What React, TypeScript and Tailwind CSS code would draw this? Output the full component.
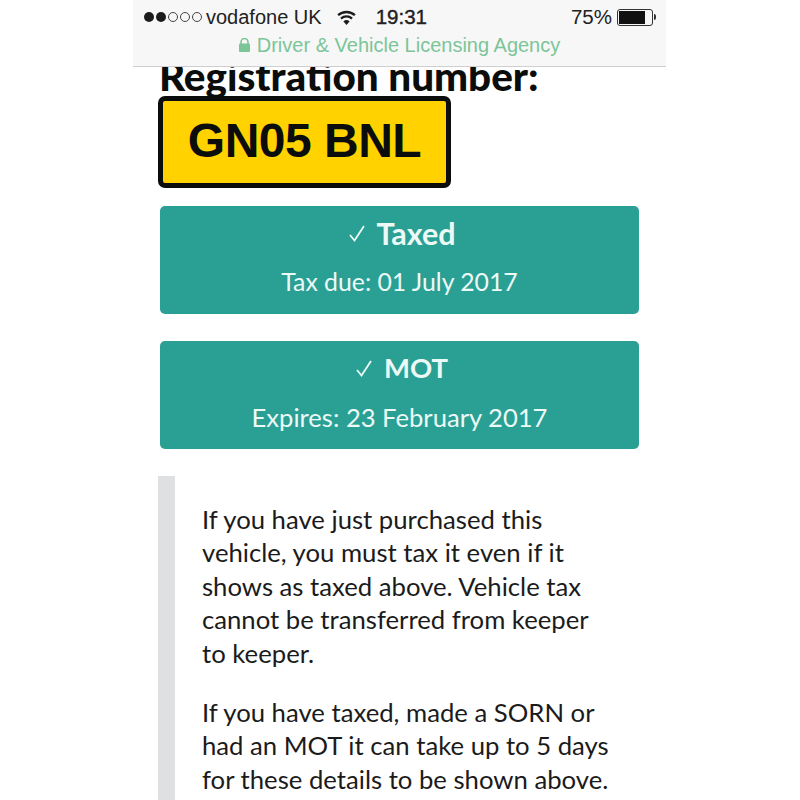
/**
 * DVLA vehicle enquiry result, photographed on a phone.
 */
const BODY_FONT = "font-['Lato','Noto_Sans',sans-serif]";

type StatusCardProps = { title: string; detail: string; check: string; size: string; detailSize: string };

function StatusCard({ title, detail, check, size, detailSize }: StatusCardProps) {
  return (
    <div className="h-[108px] rounded-[5px] bg-[#2a9f94] flex flex-col items-center text-[#ecfaf6]">
      <div className="mt-[8px] h-[38px] flex items-center">
        <svg className={check} width="18" height="17" viewBox="0 0 18 17" fill="none" stroke="currentColor" strokeWidth="1.8">
          <path d="M2 10 L6.5 15.5 L16 1" />
        </svg>
        <span className={`${size} font-bold leading-none`}>{title}</span>
      </div>
      <div className={`${detailSize} mt-[14.5px] leading-[30px]`}>{detail}</div>
    </div>
  );
}

export default function App() {
  return (
    <div className={`${BODY_FONT} h-[800px] w-[800px] overflow-hidden bg-white`}>
      <div className="mx-[133px] w-[533px]">

        {/* ── Phone browser bar ─────────────────────────────────────────── */}
        <div className="relative z-10 h-[67px] bg-[#f7f7f7] border-b border-[#cfcfcf]">
          <div className="h-[34px] flex items-center pl-[11px] pr-[10px] text-[#222] font-['Liberation_Sans',sans-serif]">
            <div className="flex items-center gap-[2px]">
              <span className="h-[10px] w-[10px] rounded-full bg-[#1c1c1c]" />
              <span className="h-[10px] w-[10px] rounded-full bg-[#1c1c1c]" />
              <span className="h-[10px] w-[10px] rounded-full border border-[#444]" />
              <span className="h-[10px] w-[10px] rounded-full border border-[#444]" />
              <span className="h-[10px] w-[10px] rounded-full border border-[#444]" />
            </div>
            <span className="ml-[4px] text-[20px]">vodafone UK</span>
            <svg className="ml-[14px]" width="21" height="16" viewBox="0 0 21 16" fill="#1c1c1c">
              <path d="M10.5 16 L7.4 12.4 A4.6 4.6 0 0 1 13.6 12.4 Z" />
              <path d="M5.7 10.4 L4.2 8.7 A9.4 9.4 0 0 1 16.8 8.7 L15.3 10.4 A7.2 7.2 0 0 0 5.7 10.4 Z" />
              <path d="M2.9 7.1 L1.3 5.3 A13.8 13.8 0 0 1 19.7 5.3 L18.1 7.1 A11.5 11.5 0 0 0 2.9 7.1 Z" />
            </svg>
            <span className="ml-[19px] text-[20.5px] font-medium [-webkit-text-stroke:0.4px_#222]">19:31</span>
            <span className="ml-auto text-[20.5px]">75%</span>
            <div className="ml-[5px] flex items-center">
              <div className="h-[17px] w-[36px] rounded-[3px] border border-[#333] p-[1px]">
                <div className="h-full w-[26px] bg-[#111]" />
              </div>
              <span className="ml-[1px] h-[6px] w-[2px] rounded-r-full bg-[#333]" />
            </div>
          </div>
          <div className="h-[22px] flex items-center justify-center gap-[7px] text-[20px] text-[#7cc597] font-['Liberation_Sans',sans-serif]">
            <svg width="11" height="14" viewBox="0 0 11 14" fill="#7cc597">
              <rect x="0" y="5.5" width="11" height="8.5" rx="1" />
              <path d="M2 6 V4 A3.5 3.5 0 0 1 9 4 V6" fill="none" stroke="#7cc597" strokeWidth="1.6" />
            </svg>
            <span>Driver &amp; Vehicle Licensing Agency</span>
          </div>
        </div>

        {/* ── Registration ──────────────────────────────────────────────── */}
        <div className="pl-[26px] pr-[27px]">
          <h1 className="-mt-[11px] text-[40.4px] font-black leading-[40px] text-[#0b0c0c] whitespace-nowrap">Registration number:</h1>
          <div className="-ml-[1px] h-[92px] w-[293px] rounded-[7px] border-[5px] border-[#0b0c0c] bg-[#ffd200] flex items-center justify-center pb-[3px]">
            <span className="text-[48px] font-bold leading-none text-[#0b0c0c] font-['Liberation_Sans',sans-serif] tracking-[-0.5px]">GN05 BNL</span>
          </div>

          <div className="mt-[18px] flex flex-col gap-[27px] pl-[1px]">
            <StatusCard title="Taxed" detail="Tax due: 01 July 2017" check="ml-[5px] mr-[10px]" size="text-[30.5px]" detailSize="text-[24.8px]" />
            <StatusCard title="MOT" detail="Expires: 23 February 2017" check="ml-[4px] mr-[11px]" size="text-[27.5px]" detailSize="text-[25.6px]" />
          </div>

          {/* ── Notes ───────────────────────────────────────────────────── */}
          <div className="mt-[27px] -ml-[1px] border-l-[17px] border-[#dee0e2] pl-[27px] pt-[27px] pb-[40px] text-[25.7px] leading-[33.4px] text-[#1b1b1b]">
            <p>
              If you have just purchased this<br />
              vehicle, you must tax it even if it<br />
              shows as taxed above. Vehicle tax<br />
              cannot be transferred from keeper<br />
              to keeper.
            </p>
            <p className="mt-[26px]">
              If you have taxed, made a SORN or<br />
              had an MOT it can take up to 5 days<br />
              for these details to be shown above.
            </p>
          </div>
        </div>
      </div>
    </div>
  );
}
